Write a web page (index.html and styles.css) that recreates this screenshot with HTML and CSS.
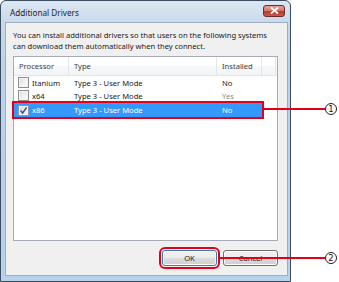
FILE: index.html
```html
<!DOCTYPE html>
<html>
<head>
<meta charset="utf-8">
<link rel="stylesheet" href="styles.css">
</head>
<body>
<div class="screen">
  <div class="window">
    <div class="titlebar">
      <span class="title">Additional Drivers</span>
      <span class="close"><svg width="9" height="7" viewBox="0 0 9 7"><path d="M1 0.5 L8 6.5 M8 0.5 L1 6.5" stroke="#fff" stroke-width="1.8"/></svg></span>
    </div>
    <div class="client">
      <p class="intro">You can install additional drivers so that users on the following systems<br>can download them automatically when they connect.</p>
      <div class="listbox">
        <div class="header">
          <div class="col c1">Processor</div>
          <div class="col c2">Type</div>
          <div class="col c3">Installed</div>
          <div class="col c4"></div>
        </div>
        <div class="row">
          <div class="cell c1"><span class="cb"></span>Itanium</div>
          <div class="cell c2">Type 3 - User Mode</div>
          <div class="cell c3">No</div>
        </div>
        <div class="row">
          <div class="cell c1"><span class="cb"></span>x64</div>
          <div class="cell c2">Type 3 - User Mode</div>
          <div class="cell c3 dim">Yes</div>
        </div>
        <div class="row selected">
          <div class="cell c1"><span class="cb checked"><svg width="9" height="9" viewBox="0 0 9 9"><path d="M1.5 4.5 L3.6 7 L7.6 1.5" stroke="#3b4f86" stroke-width="1.4" fill="none"/></svg></span>x86</div>
          <div class="cell c2">Type 3 - User Mode</div>
          <div class="cell c3">No</div>
        </div>
      </div>
      <div class="buttons">
        <button class="btn ok">OK</button>
        <button class="btn">Cancel</button>
      </div>
    </div>
  </div>
  <div class="callout callout-1"><span class="line"></span><span class="num">1</span></div>
  <div class="callout callout-2"><span class="line"></span><span class="num">2</span></div>
</div>
</body>
</html>
```
FILE: styles.css
```css
* { box-sizing: border-box; }
html, body { margin: 0; padding: 0; }
body {
  width: 339px;
  height: 282px;
  background: #fff;
  font-family: "Noto Sans", "DejaVu Sans", sans-serif;
  font-size: 7.6px;
  color: #1a1a1a;
  overflow: hidden;
}
.screen { position: relative; width: 339px; height: 282px; }

.window {
  width: 291px;
  height: 282px;
  border: 1px solid #3b4c60;
  border-radius: 6px 6px 0 0;
  background: linear-gradient(to bottom, #dce7f3 0, #c9d9eb 22px, #bcd3ea 60px, #b7d2ec 100%);
  display: flex;
  flex-direction: column;
}
.titlebar {
  height: 21px;
  display: flex;
  align-items: center;
  justify-content: space-between;
  padding: 0 5px 0 9px;
}
.title {
  font-size: 8.2px;
  color: #1e1e1e;
  margin-top: 1px;
}
.close {
  width: 22px;
  height: 12px;
  margin-top: -2px;
  border: 1px solid #6b2b2b;
  border-radius: 3px;
  background: linear-gradient(to bottom, #e3a79d 0, #d3786c 45%, #b8392b 55%, #c9584a 100%);
  display: flex;
  align-items: center;
  justify-content: center;
}
.close svg { display: block; }

.client {
  flex: 1;
  margin: 0 2px 5px 4px;
  background: #f0f0f0;
  border: 1px solid #9aaec4;
  padding: 7px 9px 0 7px;
  display: flex;
  flex-direction: column;
}
.intro {
  margin: 0;
  line-height: 10.5px;
  height: 26px;
  color: #1a1a1a;
  white-space: nowrap;
  font-size: 7.6px;
}
.listbox {
  height: 185px;
  background: #fff;
  border: 1px solid #a5acb5;
  display: flex;
  flex-direction: column;
}
.header {
  height: 19px;
  display: flex;
  background: linear-gradient(to bottom, #ffffff 0, #ffffff 50%, #f7f8fa 51%, #f3f4f6 100%);
  border-bottom: 1px solid #e3e5e8;
}
.col {
  height: 100%;
  display: flex;
  align-items: center;
  padding-left: 5px;
  border-right: 1px solid #e3e5e8;
  color: #3d3d3d;
}
.c1 { width: 55px; }
.c2 { width: 148px; }
.c3 { width: 45px; }
.c4 { width: 14px; border-right: 1px solid #e3e5e8; }

.row {
  height: 13px;
  width: 248px;
  display: flex;
  align-items: center;
}
.cell {
  height: 100%;
  display: flex;
  align-items: center;
  padding-left: 5px;
  color: #1a1a1a;
}
.row .c1 { padding-left: 4px; }
.dim { color: #8c8c8c; }
.cb {
  width: 11px;
  height: 11px;
  margin-right: 3px;
  border: 1px solid #8e8f8f;
  background: linear-gradient(135deg, #dcdcdc 0, #f4f4f4 60%, #ffffff 100%);
  box-shadow: inset 0 0 0 1px #f4f4f4;
  display: flex;
  align-items: center;
  justify-content: center;
  flex: none;
}
.cb svg { display: block; }
.row.selected {
  background: #3399ff;
  height: 14px;
  outline: 2px solid #e4001b;
  outline-offset: 0;
  margin-top: 1px;
}
.row.selected .cell { color: #fff; }
.row.selected .cb {
  background: linear-gradient(135deg, #d8d8d8 0, #f6f6f6 100%);
  border-color: #8a94a6;
}

.buttons {
  display: flex;
  justify-content: flex-end;
  gap: 6px;
  margin-top: 9px;
}
.btn {
  width: 55px;
  height: 16px;
  padding: 0;
  font-family: inherit;
  font-size: 7.6px;
  color: #1a1a1a;
  border: 1px solid #707070;
  border-radius: 3px;
  background: linear-gradient(to bottom, #f2f2f2 0, #ebebeb 50%, #dddddd 51%, #cfcfcf 100%);
  box-shadow: inset 0 0 0 1px #fcfcfc;
}
.btn.ok {
  border-color: #3c7fb1;
  outline: 2px solid #e4001b;
  outline-offset: 1px;
}

.callout {
  position: absolute;
  display: flex;
  align-items: center;
}
.callout .line {
  height: 2px;
  background: #e4001b;
}
.callout .num {
  width: 12px;
  height: 12px;
  border: 1px solid #222;
  border-radius: 50%;
  font-size: 8.5px;
  line-height: 10px;
  text-align: center;
  color: #111;
  font-family: "DejaVu Sans", sans-serif;
  background: #fff;
}
.callout-1 { left: 263px; top: 103px; }
.callout-1 .line { width: 62px; }
.callout-2 { left: 218px; top: 252px; }
.callout-2 .line { width: 107px; }
```
